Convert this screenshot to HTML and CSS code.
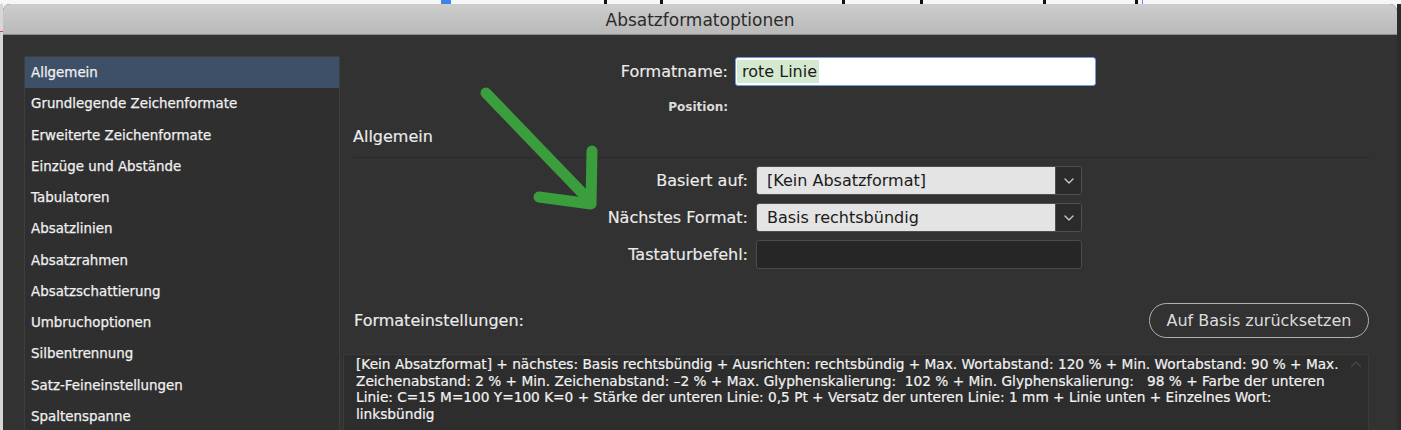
FILE: index.html
```html
<!DOCTYPE html>
<html lang="de">
<head>
<meta charset="utf-8">
<title>Absatzformatoptionen</title>
<link rel="stylesheet" href="styles.css">
</head>
<body>
<div class="screen">
  <div class="ruler">
    <span class="tick blue-block" style="left:441px"></span>
    <span class="tick" style="left:604px"></span>
    <span class="tick" style="left:660px"></span>
    <span class="tick" style="left:842px"></span>
    <span class="tick" style="left:920px"></span>
    <span class="tick" style="left:1043px"></span>
    <span class="tick" style="left:1135px"></span>
    <span class="tick blue-line" style="left:1142px"></span>
  </div>
  <div class="stage">
    <div class="edge-left"><span class="red-mark"></span></div>
    <div class="window">
      <div class="titlebar">Absatzformatoptionen</div>
      <div class="content">
        <nav class="sidebar">
          <div class="item selected">Allgemein</div>
          <div class="item">Grundlegende Zeichenformate</div>
          <div class="item">Erweiterte Zeichenformate</div>
          <div class="item">Einzüge und Abstände</div>
          <div class="item">Tabulatoren</div>
          <div class="item">Absatzlinien</div>
          <div class="item">Absatzrahmen</div>
          <div class="item">Absatzschattierung</div>
          <div class="item">Umbruchoptionen</div>
          <div class="item">Silbentrennung</div>
          <div class="item">Satz-Feineinstellungen</div>
          <div class="item">Spaltenspanne</div>
        </nav>
        <main class="main">
          <div class="name-grid">
            <div class="label">Formatname:</div>
            <div class="name-input"><span class="selection">rote Linie</span></div>
            <div class="label small">Position:</div>
            <div></div>
          </div>
          <div class="section-head">Allgemein</div>
          <div class="form-grid">
            <div class="label">Basiert auf:</div>
            <div class="select">
              <span class="select-value">[Kein Absatzformat]</span>
              <span class="select-btn"><svg width="10" height="6" viewBox="0 0 10 6"><path d="M1 1 L5 5 L9 1" fill="none" stroke="#c8c8c8" stroke-width="1.4" stroke-linecap="round" stroke-linejoin="round"/></svg></span>
            </div>
            <div class="label">Nächstes Format:</div>
            <div class="select">
              <span class="select-value">Basis rechtsbündig</span>
              <span class="select-btn"><svg width="10" height="6" viewBox="0 0 10 6"><path d="M1 1 L5 5 L9 1" fill="none" stroke="#c8c8c8" stroke-width="1.4" stroke-linecap="round" stroke-linejoin="round"/></svg></span>
            </div>
            <div class="label">Tastaturbefehl:</div>
            <div class="key-input"></div>
          </div>
          <div class="settings-head">
            <span class="settings-title">Formateinstellungen:</span>
            <button class="reset-btn">Auf Basis zurücksetzen</button>
          </div>
          <div class="settings-box">
            <svg class="scroll-up" width="12" height="7" viewBox="0 0 12 7"><path d="M1 6 L6 1 L11 6" fill="none" stroke="#474747" stroke-width="1.3"/></svg>
            <p class="settings-text">[Kein Absatzformat] + nächstes: Basis rechtsbündig + Ausrichten: rechtsbündig + Max. Wortabstand: 120 % + Min. Wortabstand: 90 % + Max.<br>Zeichenabstand: 2 % + Min. Zeichenabstand: –2 % + Max. Glyphenskalierung: &nbsp;102 % + Min. Glyphenskalierung: &nbsp; 98 % + Farbe der unteren<br>Linie: C=15 M=100 Y=100 K=0 + Stärke der unteren Linie: 0,5 Pt + Versatz der unteren Linie: 1 mm + Linie unten + Einzelnes Wort:<br>linksbündig</p>
          </div>
        </main>
      </div>
    </div>
    <div class="edge-right"></div>
  </div>
  <svg class="arrow" width="1401" height="430" viewBox="0 0 1401 430">
    <g fill="none" stroke="#3a9e3d" stroke-width="11" stroke-linecap="round" stroke-linejoin="round">
      <path d="M486 93 L590 201"/>
      <path d="M592 151 L591 203"/>
      <path d="M539 197 L591 204"/>
    </g>
  </svg>
</div>
</body>
</html>
```
FILE: styles.css
```css
* { box-sizing: border-box; }
html, body { margin: 0; padding: 0; }
body {
  width: 1401px;
  height: 430px;
  overflow: hidden;
  background: #f4f4f4;
  font-family: "DejaVu Sans", "Liberation Sans", sans-serif;
}
.screen {
  position: relative;
  width: 1401px;
  height: 430px;
  overflow: hidden;
}
.ruler {
  position: relative;
  height: 4px;
  background: #f6f6f6;
}
.tick {
  position: absolute;
  top: 0;
  width: 3px;
  height: 4px;
  background: #111;
}
.tick.blue-block { width: 10px; background: #3d86e8; }
.tick.blue-line { width: 1px; background: #5b8fe0; }
.stage {
  display: flex;
  height: 426px;
}
.edge-left {
  position: relative;
  width: 3px;
  background: #d6d6d6;
}
.red-mark {
  position: absolute;
  left: 0;
  top: 27px;
  width: 3px;
  height: 1px;
  background: #d9463a;
}
.edge-right {
  width: 4px;
  background: #2c2c2c;
}
.window {
  flex: 1;
  display: flex;
  flex-direction: column;
  background: #323232;
  border-radius: 7px 7px 0 0;
  overflow: hidden;
}
.titlebar {
  height: 31px;
  flex: none;
  background: linear-gradient(#cdcdcd, #b9b9b9);
  border-bottom: 1px solid #8d8d8d;
  color: #2b2b2b;
  font-size: 17px;
  line-height: 31px;
  text-align: center;
  padding-top: 1px;
}
.content {
  flex: 1;
  display: flex;
  padding: 21px 28px 0 21px;
}
.sidebar {
  width: 316px;
  flex: none;
  background: #2f2f2f;
  border: 1px solid #3e3e3e;
  border-bottom: none;
}
.item {
  height: 31.27px;
  line-height: 31.27px;
  padding-left: 6px;
  font-size: 13.4px;
  color: #f0f0f0;
  white-space: nowrap;
  -webkit-text-stroke: 0.25px #f0f0f0;
}
.item.selected { background: #3e5068; }
.main {
  flex: 1;
  display: flex;
  flex-direction: column;
  padding-top: 1px;
}
.label {
  color: #ececec;
  font-size: 16px;
  text-align: right;
  white-space: nowrap;
  align-self: center;
  -webkit-text-stroke: 0.15px #ececec;
}
.label.small { font-size: 12px; font-weight: bold; color: #dcdcdc; -webkit-text-stroke: 0; }
.name-grid {
  display: grid;
  grid-template-columns: 388px 361px;
  grid-template-rows: 29px 20px;
  column-gap: 7px;
  row-gap: 11px;
}
.name-input {
  background: #fff;
  border: 1px solid #6b9fe2;
  border-radius: 3px;
  padding: 0 0 0 1px;
  display: flex;
  align-items: center;
}
.selection {
  background: #d4ead0;
  color: #1b1b1b;
  font-size: 16px;
  line-height: 23px;
  padding: 0 2px 0 5px;
}
.section-head {
  margin: 10px 0 0 13px;
  height: 31px;
  line-height: 20px;
  color: #ececec;
  font-size: 16px;
  border-bottom: 1px solid #292929;
  -webkit-text-stroke: 0.15px #ececec;
}
.form-grid {
  margin-top: 8px;
  display: grid;
  grid-template-columns: 408px 326px;
  grid-auto-rows: 29px;
  column-gap: 8px;
  row-gap: 8px;
}
.select {
  display: flex;
  border: 1px solid #4f4f4f;
  border-radius: 3px;
  overflow: hidden;
}
.select-value {
  flex: 1;
  background: #e4e4e4;
  color: #1a1a1a;
  font-size: 16px;
  line-height: 27px;
  padding-left: 10px;
  white-space: nowrap;
}
.select-btn {
  width: 26px;
  flex: none;
  background: #2b2b2b;
  border-left: 1px solid #4f4f4f;
  display: flex;
  align-items: center;
  justify-content: center;
}
.key-input {
  background: #262626;
  border: 1px solid #4c4c4c;
  border-radius: 3px;
}
.settings-head {
  margin-top: 34px;
  display: flex;
  align-items: center;
  justify-content: space-between;
  height: 35px;
}
.settings-title {
  margin-left: 14px;
  color: #ececec;
  font-size: 16px;
  -webkit-text-stroke: 0.15px #ececec;
}
.reset-btn {
  width: 220px;
  height: 35px;
  border: 1.5px solid #b0b0b0;
  border-radius: 18px;
  background: transparent;
  color: #dcdcdc;
  font-family: "DejaVu Sans", "Liberation Sans", sans-serif;
  font-size: 16px;
  padding: 0;
}
.settings-box {
  position: relative;
  margin: 16px 0 0 3px;
  flex: 1;
  background: #2d2d2d;
  border: 1px solid #3a3a3a;
  border-bottom: none;
  padding: 1px 0 0 12px;
}
.scroll-up {
  position: absolute;
  right: 6px;
  top: 6px;
}
.settings-text {
  margin: 0;
  color: #f2f2f2;
  font-size: 13.7px;
  line-height: 16.6px;
  white-space: nowrap;
  -webkit-text-stroke: 0.2px #f2f2f2;
}
.arrow {
  position: absolute;
  left: 0;
  top: 0;
  pointer-events: none;
}
```
